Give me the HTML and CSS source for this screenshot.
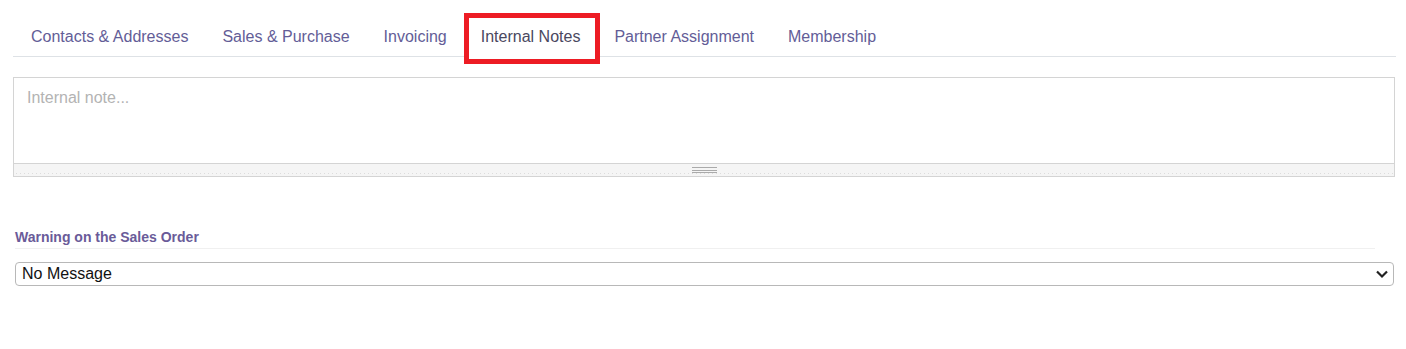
FILE: index.html
```html
<!DOCTYPE html>
<html>
<head>
<title>Internal Notes</title>
<link rel="stylesheet" href="styles.css">
</head>
<body>
  <div class="sheet">
    <ul class="tabs">
      <li class="tab">Contacts &amp; Addresses</li>
      <li class="tab">Sales &amp; Purchase</li>
      <li class="tab">Invoicing</li>
      <li class="tab active">Internal Notes<span class="highlight"></span></li>
      <li class="tab">Partner Assignment</li>
      <li class="tab">Membership</li>
    </ul>

    <div class="note">
      <div class="note-body">Internal note...</div>
      <div class="note-grip">
        <span class="grip-lines"></span>
      </div>
    </div>

    <div class="warning">
      <div class="warning-label">Warning on the Sales Order</div>
      <div class="select">
        <span>No Message</span>
        <svg class="chevron" width="14" height="10" viewBox="0 0 14 10">
          <path d="M2 2.5 L7 7.5 L12 2.5" fill="none" stroke="#222" stroke-width="2.2"/>
        </svg>
      </div>
    </div>
  </div>
</body>
</html>
```

FILE: styles.css
```css
body {
  margin: 0;
  font-family: "Liberation Sans", Arial, sans-serif;
  background-color: #fff;
  color: #212529;
}

.sheet {
  padding: 16px 10px 0 13px;
}

/* Tabs */
.tabs {
  list-style: none;
  margin: 0;
  padding: 0 0 0 1px;
  display: flex;
  border-bottom: 1px solid #dee2e6;
}

.tab {
  position: relative;
  padding: 8px 16px 7px;
  font-size: 16px;
  line-height: 24px;
  color: #635d97;
  border: 1px solid transparent;
  border-bottom: none;
}

.tab.active {
  color: #4a4860;
  border-color: #dee2e6;
  background-color: #fff;
  margin-bottom: -1px;
  padding-bottom: 8px;
}

/* red annotation box drawn over the active tab */
.highlight {
  position: absolute;
  left: -1px;
  top: -4px;
  width: 136px;
  height: 51px;
  box-sizing: border-box;
  border: 5px solid #ed1c24;
}

/* Note field */
.note {
  margin-top: 20px;
  border: 1px solid #d4d4d4;
  margin-right: 1px;
}

.note-body {
  height: 85px;
  padding: 8px 13px;
  box-sizing: border-box;
  font-size: 16px;
  line-height: 24px;
  color: #b3b3b3;
}

.note-grip {
  height: 13px;
  box-sizing: border-box;
  border-top: 1px solid #d4d4d4;
  background-color: #f5f5f5;
  display: flex;
  justify-content: center;
  padding-top: 3px;
  background-image: linear-gradient(to right, #dcdcdc 1px, transparent 1px);
  background-size: 4px 1px;
  background-repeat: repeat-x;
  background-position: 2px 9px;
}

.grip-lines {
  width: 25px;
  height: 6px;
  border-top: 1px solid #aaa;
  border-bottom: 1px solid #aaa;
  background: linear-gradient(#aaa, #aaa) center / 100% 1px no-repeat;
  box-sizing: border-box;
  background-color: #f5f5f5;
}

/* Warning select */
.warning {
  margin-top: 51px;
  padding-left: 2px;
}

.warning-label {
  font-size: 14px;
  font-weight: bold;
  line-height: 18px;
  color: #6a5b99;
  padding-bottom: 2px;
  margin-right: 21px;
  border-bottom: 1px solid #f0f0f0;
}

.select {
  margin: 13px 2px 0 0;
  height: 24px;
  box-sizing: border-box;
  border: 1px solid #b8b8b8;
  border-radius: 4px;
  display: flex;
  align-items: center;
  justify-content: space-between;
  padding: 0 4px 0 6px;
  font-size: 16px;
  color: #111;
}

.chevron {
  display: block;
}
```
